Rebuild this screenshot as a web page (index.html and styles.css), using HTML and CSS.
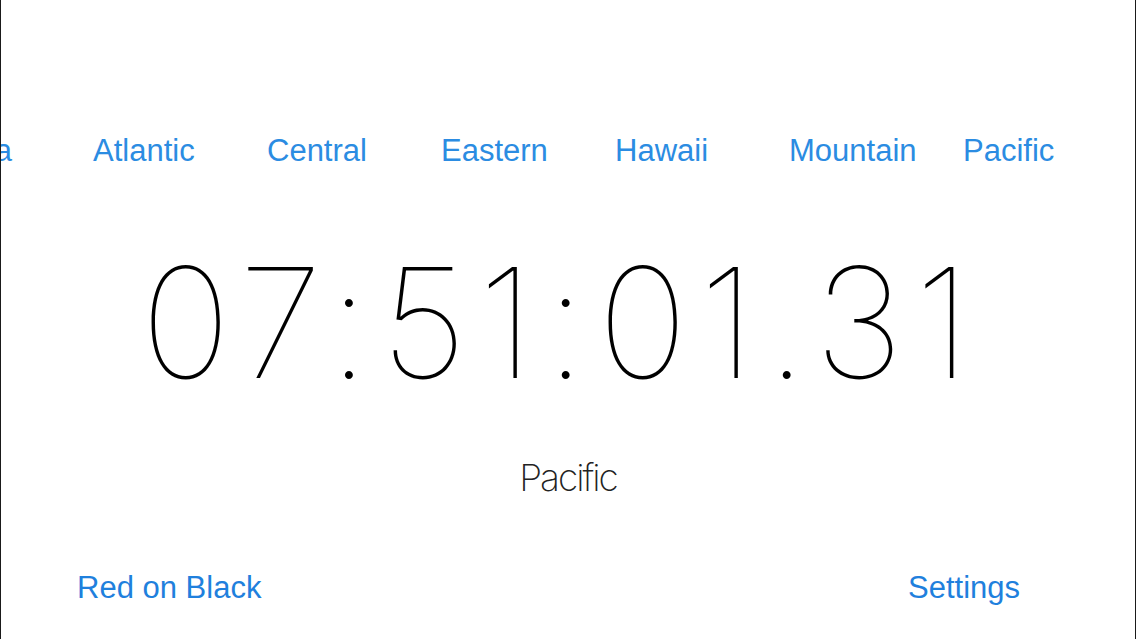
FILE: index.html
```html
<!DOCTYPE html>
<html lang="en">
<head>
<meta charset="utf-8">
<title>World Clock</title>
<link rel="stylesheet" href="styles.css">
</head>
<body>
<div class="screen">
  <nav class="zones">
    <div class="zones-track">
      <a class="zone">Alaska</a>
      <a class="zone">Atlantic</a>
      <a class="zone">Central</a>
      <a class="zone">Eastern</a>
      <a class="zone">Hawaii</a>
      <a class="zone">Mountain</a>
      <a class="zone">Pacific</a>
    </div>
  </nav>
  <div class="clock">07:51:01.31</div>
  <div class="zone-name">Pacific</div>
  <div class="spacer"></div>
  <footer class="actions">
    <a class="action">Red on Black</a>
    <a class="action">Settings</a>
  </footer>
</div>
</body>
</html>
```

FILE: styles.css
```css
html, body {
  margin: 0;
  padding: 0;
  background: #ffffff;
}

.screen {
  box-sizing: border-box;
  width: 1136px;
  height: 639px;
  border-left: 1px solid #1a1a1a;
  border-right: 1px solid #1a1a1a;
  background: #ffffff;
  display: flex;
  flex-direction: column;
  overflow: hidden;
}

.zones {
  margin-top: 133px;
  overflow: hidden;
}

.zones-track {
  display: flex;
  margin-left: -82px;
}

.zone {
  flex: 0 0 174px;
  font-family: "Liberation Sans", Arial, sans-serif;
  font-size: 31px;
  line-height: normal;
  color: #2b8ce2;
  white-space: nowrap;
}

.clock {
  margin-top: 74px;
  padding-right: 14px;
  font-family: Inter, Roboto, "Liberation Sans", sans-serif;
  font-weight: 100;
  font-size: 153px;
  line-height: 160px;
  height: 160px;
  letter-spacing: 11px;
  text-align: center;
  color: #000000;
  white-space: nowrap;
  font-feature-settings: "calt" 0;
}

.zone-name {
  margin-top: 52px;
  font-family: Inter, Roboto, "Liberation Sans", sans-serif;
  font-weight: 200;
  font-size: 37px;
  line-height: normal;
  letter-spacing: -2px;
  text-align: center;
  color: #222222;
}

.spacer {
  flex: 1 1 auto;
}

.actions {
  display: flex;
  justify-content: space-between;
  padding: 0 115px 33px 76px;
}

.action {
  font-family: "Liberation Sans", Arial, sans-serif;
  font-size: 31px;
  line-height: normal;
  color: #1f80dd;
}
```
